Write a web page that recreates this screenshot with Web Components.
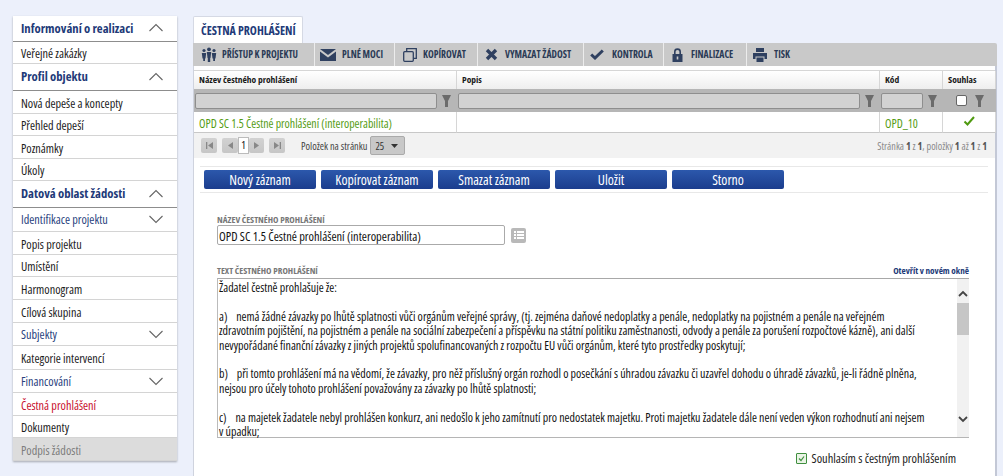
<!DOCTYPE html>
<html lang="cs">
<head>
<meta charset="utf-8">
<title>Čestná prohlášení</title>
<style>
html, body { margin: 0; padding: 0; height: 476px; overflow: hidden; }
body {
  background: #ecf0fb;
  font-family: "Open Sans", "Roboto Condensed", sans-serif;
  font-stretch: 75%;
  font-size: 12px;
  color: #1a1a1a;
}
#page { display: flex; align-items: flex-start; gap: 16px; padding: 16px 6px 0 13px; }
</style>
</head>
<body>
<div id="page">
  <side-menu>
    <menu-item kind="head" open h="26">Informování o realizaci</menu-item>
    <menu-item h="22">Veřejné zakázky</menu-item>
    <menu-item kind="head" open h="27">Profil objektu</menu-item>
    <menu-item h="23">Nová depeše a koncepty</menu-item>
    <menu-item h="22">Přehled depeší</menu-item>
    <menu-item h="23">Poznámky</menu-item>
    <menu-item h="22">Úkoly</menu-item>
    <menu-item kind="head" open h="27">Datová oblast žádosti</menu-item>
    <menu-item kind="sub" h="24">Identifikace projektu</menu-item>
    <menu-item h="23">Popis projektu</menu-item>
    <menu-item h="22">Umístění</menu-item>
    <menu-item h="23">Harmonogram</menu-item>
    <menu-item h="23">Cílová skupina</menu-item>
    <menu-item kind="sub" h="23">Subjekty</menu-item>
    <menu-item h="24">Kategorie intervencí</menu-item>
    <menu-item kind="sub" h="23">Financování</menu-item>
    <menu-item kind="active" h="23">Čestná prohlášení</menu-item>
    <menu-item h="22">Dokumenty</menu-item>
    <menu-item kind="off" h="23">Podpis žádosti</menu-item>
  </side-menu>
  <main-panel>
    <span slot="tab">ČESTNÁ PROHLÁŠENÍ</span>
    <tool-bar slot="tools"></tool-bar>
    <data-grid></data-grid>
    <record-form></record-form>
  </main-panel>
</div>

<script>
class SideMenu extends HTMLElement {
  constructor() {
    super();
    this.attachShadow({ mode: 'open' });
    this.shadowRoot.innerHTML = `
    <style>
    :host { display: block; width: 164px; flex: none; background: #fff; box-shadow: 0 1px 2px rgba(0,0,0,.3); }
    </style>
    <slot></slot>`;
  }
}
customElements.define('side-menu', SideMenu);

class MenuItem extends HTMLElement {
  constructor() {
    super();
    this.attachShadow({ mode: 'open' });
    const kind = this.getAttribute('kind') || '';
    const arrow = (kind === 'head' || kind === 'sub')
      ? `<svg width="16" height="9" viewBox="0 0 16 9"><path d="${this.hasAttribute('open') ? 'M1.5 8 8 1.5 14.5 8' : 'M1.5 1 8 7.5 14.5 1'}" fill="none" stroke="#666" stroke-width="1.1"/></svg>`
      : '';
    this.shadowRoot.innerHTML = `
    <style>
    :host { display: flex; box-sizing: border-box; align-items: center; justify-content: space-between; height: ${this.getAttribute('h')}px; padding: 2px 13px 0 8px; border-bottom: 1px solid #d4d4d4; font-size: 12.2px; color: #1c1c1c; white-space: nowrap; }
    :host([kind=head]) { padding: 0 13px 2px 8px; font-size: 12.7px; font-weight: 700; color: #223a78; border-bottom: 1px solid #8d8d8d; }
    :host([kind=sub]) { padding-top: 0; color: #2a3f7e; }
    :host([kind=active]) { color: #c8102e; }
    :host([kind=off]) { color: #7d7d7d; background: #dcdcdc; }
    </style>
    <span><slot></slot></span>${arrow}`;
  }
}
customElements.define('menu-item', MenuItem);

class MainPanel extends HTMLElement {
  constructor() {
    super();
    this.attachShadow({ mode: 'open' });
    this.shadowRoot.innerHTML = `
    <style>
    :host { display: block; flex: 1; min-width: 0; }
    .tab { box-sizing: border-box; height: 27px; padding: 0 6px 0 7px; line-height: 27px; background: #fff; border: 1px solid #d5d9e4; border-bottom: 0; border-radius: 2px 2px 0 0; font-size: 11.9px; font-weight: 700; color: #223a78; }
    .tabs { display: flex; height: 27px; }
    .body { box-sizing: border-box; height: 410px; background: #fff; border-left: 1px solid #cfd3de; border-right: 2px solid #c3c8d6; }
    </style>
    <div class="tabs"><div class="tab"><slot name="tab"></slot></div></div>
    <slot name="tools"></slot>
    <div class="body"><slot></slot></div>`;
  }
}
customElements.define('main-panel', MainPanel);

const ink = '#2f4060';
const ICONS = {
  people: `<svg width="16" height="15" viewBox="0 0 16 15" fill="${ink}"><circle cx="3" cy="3.5" r="1.6"/><circle cx="8" cy="2.3" r="1.9"/><circle cx="13" cy="3.5" r="1.6"/><path d="M.8 6h4.4L4.5 11.500H4V14H2.200v-2.500H1.500zM5.800 5h4.400l-.7 6H9.200v4H6.800v-4h-.3zM10.800 6h4.400l-.7 5.500H14V14h-1.800v-2.500h-.7z"/></svg>`,
  mail: `<svg width="16" height="12" viewBox="0 0 16 12" fill="${ink}"><path d="M0 0h16L8 6z"/><path d="M0 2.5 8 8.5 16 2.5V12H0z"/></svg>`,
  copy: `<svg width="14" height="14" viewBox="0 0 14 14" fill="none" stroke="${ink}" stroke-width="1.3"><rect x=".7" y="3.700" width="9.600" height="9.600" rx="1"/><path d="M3.700 3.500V.7h9.600v9.600h-2.800"/></svg>`,
  cross: `<svg width="13" height="13" viewBox="0 0 13 13"><path d="M2 2l9 9M11 2l-9 9" stroke="${ink}" stroke-width="3.4"/></svg>`,
  check: `<svg width="14" height="11" viewBox="0 0 14 11"><path d="M1.200 5.500 5 9 12.800 1.500" fill="none" stroke="${ink}" stroke-width="3"/></svg>`,
  lock: `<svg width="11" height="14" viewBox="0 0 11 14"><path d="M2.800 6V3.800a2.700 2.700 0 0 1 5.400 0V6" fill="none" stroke="${ink}" stroke-width="1.6"/><path d="M.5 6h10v8H.5z" fill="${ink}"/><rect x="4.700" y="8.500" width="1.600" height="3" fill="#c9c9c9"/></svg>`,
  print: `<svg width="14" height="14" viewBox="0 0 14 14" fill="${ink}"><path d="M3 0h8v4H3zM0 5h14v6h-2.500V8.500h-9V11H0zM3.500 9.500h7V14h-7z"/></svg>`
};

class ToolBar extends HTMLElement {
  constructor() {
    super();
    this.attachShadow({ mode: 'open' });
    const items = [
      ['people', 'PŘÍSTUP K PROJEKTU', 122, 15.5, 29],
      ['mail', 'PLNÉ MOCI', 80, 13, 27],
      ['copy', 'KOPÍROVAT', 83, 15, 28],
      ['cross', 'VYMAZAT ŽÁDOST', 106, 13, 27],
      ['check', 'KONTROLA', 80, 13, 28],
      ['lock', 'FINALIZACE', 83, 13.5, 27],
      ['print', 'TISK', 60, 13, 27]
    ];
    this.shadowRoot.innerHTML = `
    <style>
    :host { display: flex; height: 23px; background: #c9c9c9; border-radius: 0 2px 0 0; }
    .b { display: flex; flex: none; box-sizing: border-box; align-items: center; height: 23px; border-right: 1px solid #ececec; font-size: 9.7px; font-weight: 700; color: #2b3a55; white-space: nowrap; }
    .b:last-child { border: 0; }
    .i { width: 16px; display: flex; justify-content: center; flex: none; }
    </style>
    ${items.map(i => `<div class="b" style="width:${i[2]}px;padding-left:${i[3] - 8}px"><span class="i" style="margin-right:${i[4] - i[3] - 8}px">${ICONS[i[0]]}</span>${i[1]}</div>`).join('')}`;
  }
}
customElements.define('tool-bar', ToolBar);

const funnel = '<svg width="9" height="12" viewBox="0 0 9 12"><path d="M0 0h9L6 6v6H3V6z" fill="#6b6b6b"/></svg>';
class DataGrid extends HTMLElement {
  constructor() {
    super();
    this.attachShadow({ mode: 'open' });
    this.shadowRoot.innerHTML = `
    <style>
    :host { display: block; padding-top: 4px; }
    .g { display: grid; grid-template-columns: 263px 423px 63px 53px; border-top: 1px solid #d6d6d6; border-right: 1px solid #d6d6d6; }
    .h { height: 18px; line-height: 18px; padding-left: 5px; font-size: 9.5px; font-weight: 700; background: linear-gradient(#fff, #eee); border-right: 1px solid #d6d6d6; white-space: nowrap; }
    .f { height: 23px; background: #b6b6b6; display: flex; align-items: center; gap: 5px; padding: 0 6px 0 1px; box-sizing: border-box; }
    .f i { flex: 1; height: 14px; background: #d2d2d2; border: 1px solid #8e8e8e; border-radius: 2px; display: block; }
    .f b { width: 9px; height: 12px; display: block; line-height: 0; }
    .f.c { justify-content: center; gap: 8px; padding: 0; }
    .box { width: 9px; height: 9px; background: #fff; border: 1px solid #666; border-radius: 2px; }
    .d { height: 20px; line-height: 22px; padding-left: 5px; background: #fff; border-right: 1px solid #d6d6d6; border-bottom: 1px solid #c8c8c8; color: #559c14; font-size: 11.85px; white-space: nowrap; }
    .d.m { text-align: center; padding: 0; line-height: 18px; }
    .pager { height: 25px; background: #f2f2f2; display: flex; align-items: center; padding: 0 8px 0 7px; font-size: 10.3px; color: #444; }
    .p { width: 16px; height: 15px; background: linear-gradient(#d2d2d2, #c6c6c6); border-radius: 2px; display: flex; align-items: center; justify-content: center; flex: none; }
    .n { width: 9px; height: 15px; background: #fff; border: 1px solid #bbb; text-align: center; line-height: 15px; font-size: 10.5px; color: #111; flex: none; }
    .sz { width: 35px; height: 19px; box-sizing: border-box; background: #c8c8c8; border: 1px solid #aaa; border-radius: 2px; margin-left: 3px; display: flex; justify-content: space-between; padding: 0 6px 0 4px; align-items: center; color: #333; }
    .sp { margin-left: auto; font-size: 10.2px; color: #8a8a8a; }
    .sp b { color: #555; font-weight: 700; }
    </style>
    <div class="g">
      <div class="h">Název čestného prohlášení</div><div class="h">Popis</div><div class="h">Kód</div><div class="h">Souhlas</div>
      <div class="f"><i></i><b>${funnel}</b></div><div class="f"><i></i><b>${funnel}</b></div><div class="f"><i></i><b>${funnel}</b></div>
      <div class="f c"><span class="box"></span>${funnel}</div>
      <div class="d">OPD SC 1.5 Čestné prohlášení (interoperabilita)</div><div class="d"></div><div class="d">OPD_10</div>
      <div class="d m"><svg width="12" height="10" viewBox="0 0 12 10"><path d="M1.5 5.5 4.5 8.5 11 1" fill="none" stroke="#4f9a10" stroke-width="2"/></svg></div>
    </div>
    <div class="pager">
      <span class="p"><svg width="7" height="7" viewBox="0 0 7 7" fill="#888"><path d="M0 0h1.300v7H0zM7 0v7L2 3.500z"/></svg></span>
      <span class="p" style="margin-left:5px"><svg width="5" height="7" viewBox="0 0 5 7" fill="#888"><path d="M5 0v7L0 3.500z"/></svg></span>
      <span class="n">1</span>
      <span class="p" style="width:15px"><svg width="5" height="7" viewBox="0 0 5 7" fill="#888"><path d="M0 0v7l5-3.500z"/></svg></span>
      <span class="p" style="margin-left:5px"><svg width="7" height="7" viewBox="0 0 7 7" fill="#888"><path d="M7 0H5.700v7H7zM0 0v7l5-3.500z"/></svg></span>
      <span style="margin-left:16px">Položek na stránku</span>
      <span class="sz">25 <svg width="7" height="4" viewBox="0 0 7 4"><path d="M0 0h7L3.500 4z" fill="#333"/></svg></span>
      <span class="sp">Stránka <b>1</b> z <b>1</b>, položky <b>1</b> až <b>1</b> z <b>1</b></span>
    </div>`;
  }
}
customElements.define('data-grid', DataGrid);

class RecordForm extends HTMLElement {
  constructor() {
    super();
    this.attachShadow({ mode: 'open' });
    this.shadowRoot.innerHTML = `
    <style>
    :host { display: block; padding: 8px 7px 0 6px; }
    .btns { display: flex; gap: 5px; height: 27px; box-sizing: border-box; align-items: center; border-top: 1px solid #e8e8e8; border-bottom: 1px solid #e8e8e8; padding-left: 4px; }
    .btn { width: 112px; height: 19px; line-height: 19px; text-align: center; color: #fff; font-size: 13.8px; border-radius: 2px; background: linear-gradient(#2c58ac, #1b3d8d); }
    .in { padding: 0 19px 0 17px; }
    .lab { height: 10px; font-size: 9.2px; line-height: 10px; font-weight: 700; color: #777; }
    .row { display: flex; gap: 6px; align-items: center; }
    .input { width: 288px; box-sizing: border-box; height: 20px; line-height: 21px; padding-left: 1px; border: 1px solid #aaa; border-radius: 2px; font-size: 12.4px; color: #111; }
    .ico { width: 15px; height: 15px; background: #b9b9b9; border-radius: 2px; display: flex; align-items: center; justify-content: center; }
    .lr { display: flex; justify-content: space-between; align-items: flex-end; margin-top: 21px; }
    .open { font-size: 9.2px; font-weight: 700; color: #223a78; line-height: 10px; }
    .txt { display: flex; height: 160px; margin-top: 2px; box-sizing: border-box; border-top: 1px solid #a8a8a8; border-bottom: 1px solid #b5b5b5; border-left: 1px solid #bbb; }
    .c { flex: 1; height: 156px; padding: 2px 0 0 1px; font-size: 11.95px; line-height: 14.4px; color: #111; white-space: pre; }
    .sb { width: 12px; flex: none; background: #f1f1f1; display: flex; flex-direction: column; align-items: center; }
    .th { width: 12px; height: 32px; background: #c6c6c6; margin-top: 6px; }
    .agree { display: flex; justify-content: flex-end; align-items: center; gap: 5px; margin-top: 12px; padding-right: 13px; font-size: 12.4px; color: #222; }
    .cb { width: 9px; height: 9px; border: 1px solid #3f8f3f; border-radius: 1px; background: #eaf4e6; line-height: 0; }
    </style>
    <div class="btns">
      <div class="btn">Nový záznam</div><div class="btn">Kopírovat záznam</div><div class="btn">Smazat záznam</div><div class="btn">Uložit</div><div class="btn">Storno</div>
    </div>
    <div class="in">
      <div class="lab" style="margin-top:22px">NÁZEV ČESTNÉHO PROHLÁŠENÍ</div>
      <div class="row">
        <div class="input">OPD SC 1.5 Čestné prohlášení (interoperabilita)</div>
        <span class="ico"><svg width="10" height="10" viewBox="0 0 10 10" fill="#fff"><path d="M0 1h2v2H0zM3 1h7v2H3zM0 4h2v2H0zM3 4h7v2H3zM0 7h2v2H0zM3 7h7v2H3z"/></svg></span>
      </div>
      <div class="lr"><span class="lab">TEXT ČESTNÉHO PROHLÁŠENÍ</span><span class="open">Otevřít v novém okně</span></div>
      <div class="txt">
        <div class="c">Žadatel čestně prohlašuje že:

a)    nemá žádné závazky po lhůtě splatnosti vůči orgánům veřejné správy, (tj. zejména daňové nedoplatky a penále, nedoplatky na pojistném a penále na veřejném
zdravotním pojištění, na pojistném a penále na sociální zabezpečení a příspěvku na státní politiku zaměstnanosti, odvody a penále za porušení rozpočtové kázně), ani další
nevypořádané finanční závazky z jiných projektů spolufinancovaných z rozpočtu EU vůči orgánům, které tyto prostředky poskytují;

b)    při tomto prohlášení má na vědomí, že závazky, pro něž příslušný orgán rozhodl o posečkání s úhradou závazku či uzavřel dohodu o úhradě závazků, je-li řádně plněna,
nejsou pro účely tohoto prohlášení považovány za závazky po lhůtě splatnosti;

c)    na majetek žadatele nebyl prohlášen konkurz, ani nedošlo k jeho zamítnutí pro nedostatek majetku. Proti majetku žadatele dále není veden výkon rozhodnutí ani nejsem
v úpadku;</div>
        <div class="sb">
          <svg style="margin-top:11px" width="10" height="7" viewBox="0 0 10 7"><path d="M1 6 5 2l4 4" fill="none" stroke="#444" stroke-width="1.8"/></svg>
          <div class="th"></div>
          <svg style="margin-top:auto;margin-bottom:14px" width="10" height="7" viewBox="0 0 10 7"><path d="M1 1l4 4 4-4" fill="none" stroke="#444" stroke-width="1.8"/></svg>
        </div>
      </div>
      <div class="agree"><span class="cb"><svg width="9" height="9" viewBox="0 0 9 9"><path d="M2 4.500 4 6.500 7 2.500" fill="none" stroke="#3f8f3f" stroke-width="1.2"/></svg></span>Souhlasím s čestným prohlášením</div>
    </div>`;
  }
}
customElements.define('record-form', RecordForm);
</script>
</body>
</html>
